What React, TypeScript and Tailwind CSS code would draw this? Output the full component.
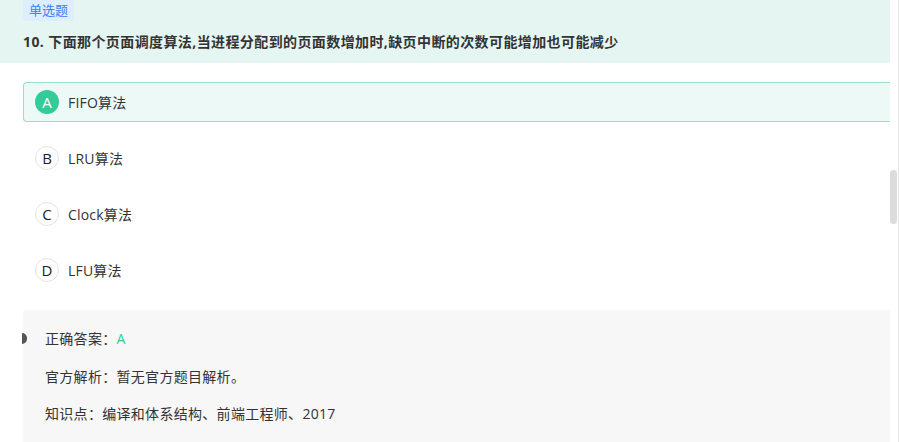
import React from 'react';

const options = [
  { key: 'A', text: 'FIFO算法' },
  { key: 'B', text: 'LRU算法' },
  { key: 'C', text: 'Clock算法' },
  { key: 'D', text: 'LFU算法' },
];

const correct = 'A';

export default function App() {
  return (
    <div
      className="flex h-[442px] w-[899px] overflow-hidden bg-white text-[#333]"
      style={{ fontFamily: '"Open Sans", "Noto Sans CJK SC", sans-serif' }}
    >
      <div className="flex w-[890px] flex-col">
        {/* Question header */}
        <div className="flex h-[63px] flex-col bg-[#e5f5f2] pl-[23px]">
          <div className="flex h-[21px] w-[51px] items-center justify-center rounded-b-[4px] bg-[#ddeeff] text-[13px] leading-none text-[#3f7ff6]">
            单选题
          </div>
          <div className="mt-[11px] text-[14px] font-bold leading-[20px] tracking-[0.4px] text-[#333]">
            10. 下面那个页面调度算法,当进程分配到的页面数增加时,缺页中断的次数可能增加也可能减少
          </div>
        </div>

        {/* Options */}
        <div className="mt-[19px] flex flex-col gap-[16px] pl-[23px]">
          {options.map((o) => {
            const active = o.key === correct;
            return (
              <div
                key={o.key}
                className={
                  active
                    ? 'flex h-[40px] items-center gap-[9px] rounded-l-[4px] border border-r-0 border-[#93e2c9] bg-[#ecf9f6] pl-[11px]'
                    : 'flex h-[40px] items-center gap-[9px] border border-transparent pl-[11px]'
                }
              >
                <span
                  className={
                    active
                      ? 'flex h-[24px] w-[24px] items-center justify-center rounded-full bg-[#33cc99] text-[15px] text-white'
                      : 'flex h-[24px] w-[24px] items-center justify-center rounded-full border border-[#e3e3e3] text-[15px] text-[#222]'
                  }
                >
                  {o.key}
                </span>
                <span className="text-[14px] tracking-[0.2px]">{o.text}</span>
              </div>
            );
          })}
        </div>

        {/* Answer panel */}
        <div className="relative ml-[23px] mt-[20px] flex flex-1 flex-col rounded-tl-[4px] bg-[#f7f7f7] pl-[22px] pt-[19px] text-[14px] leading-[20px] tracking-[0.3px]">
          <span className="absolute left-[-1px] top-[23px] h-[11px] w-[5px] rounded-r-full bg-[#555]" />
          <div>
            正确答案：<span className="text-[#38c99b]">A</span>
          </div>
          <div className="mt-[18px]">官方解析：暂无官方题目解析。</div>
          <div className="mt-[17px]">知识点：编译和体系结构、前端工程师、2017</div>
        </div>
      </div>

      {/* Scrollbar */}
      <div className="flex w-[9px] border-r border-[#e6e6e6]">
        <div className="mt-[170px] h-[54px] w-[7px] rounded-full bg-[#dcdcdc]" />
      </div>
    </div>
  );
}
